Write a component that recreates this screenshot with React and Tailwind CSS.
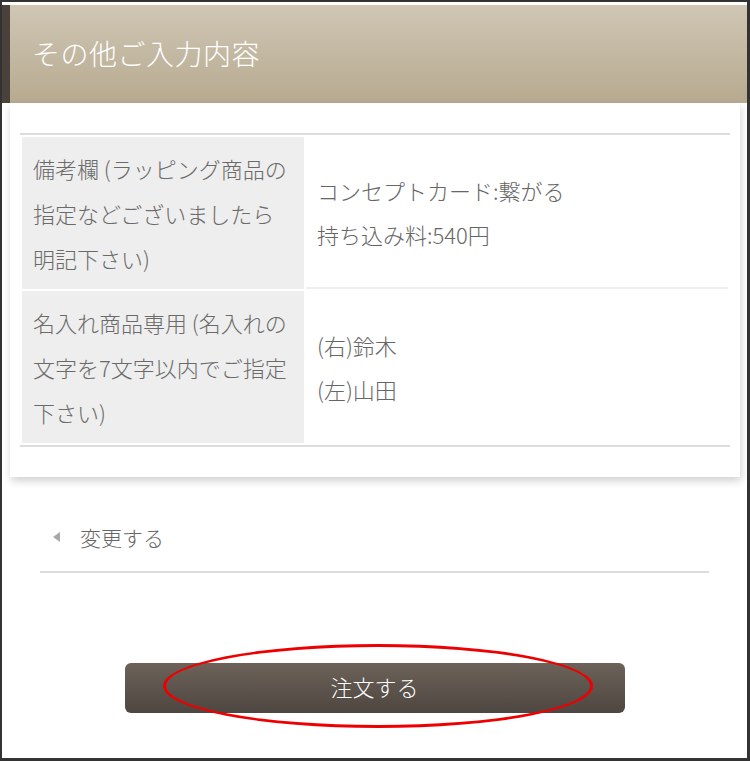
const font = { fontFamily: '"Noto Sans CJK JP", "Noto Sans", sans-serif' }

function InfoTable() {
  const rows = [
    {
      label: '備考欄 (ラッピング商品の指定などございましたら明記下さい)',
      value: ['コンセプトカード:繋がる', '持ち込み料:540円'],
      line: true
    },
    {
      label: '名入れ商品専用 (名入れの文字を7文字以内でご指定下さい)',
      value: ['(右)鈴木', '(左)山田'],
      line: false
    }
  ]

  return (
    <table className="w-[710px] border-separate border-spacing-[2px] border-y-2 border-[#dcdcdc] table-fixed">
      <tbody>
        {rows.map((row, index) => (
          <tr key={index}>
            <th className="w-[282px] h-[152px] bg-[#eeeeee] px-[11px] text-left align-middle font-light text-[22px] leading-[45px] text-[#6a6a6a]">
              {row.label}
            </th>
            <td
              className={
                'h-[152px] px-[11px] align-middle font-light text-[22px] leading-[44px] text-[#666] ' +
                (row.line ? 'border-b-2 border-[#eeeeee]' : '')
              }
            >
              {row.value.map((v, i) => (
                <div key={i}>{v}</div>
              ))}
            </td>
          </tr>
        ))}
      </tbody>
    </table>
  )
}

export default function App() {
  return (
    <div className="w-[750px] h-[761px] bg-[#333333] pt-[2px] pl-[2px] pr-[3px] pb-[3px]" style={font}>
      <div className="h-full bg-white pt-[3px] flex flex-col">
        <div className="h-[98px] border-l-[8px] border-[#4a413b] bg-gradient-to-b from-[#cfc6b4] to-[#b7aa90] flex items-center pl-[22px] pb-[2px]">
          <h1 className="text-[28px] font-light text-white tracking-[0.5px]">その他ご入力内容</h1>
        </div>

        <div className="ml-[8px] mr-[7px] bg-white px-[10px] py-[30px] shadow-[1px_4px_8px_rgba(0,0,0,0.18)]">
          <InfoTable />
        </div>

        <div className="mx-[38px] mt-[45px] pb-[19px] border-b-2 border-[#dddddd] flex items-center">
          <span className="ml-[13px] w-0 h-0 border-y-[5px] border-y-transparent border-r-[7px] border-r-[#a8a8a8]" />
          <a className="ml-[20px] font-light text-[21px] leading-[30px] text-[#666]">変更する</a>
        </div>

        <div className="relative mx-auto mt-[90px] w-[500px]">
          <button className="w-full h-[50px] pb-[4px] rounded-[6px] bg-gradient-to-b from-[#6c6259] to-[#4e4640] text-white text-[22px] leading-[30px] font-light">
            注文する
          </button>
          <div className="absolute left-[38px] top-[-19px] w-[430px] h-[84px] rounded-[50%] border-[3px] border-[#ee0000] pointer-events-none" />
        </div>
      </div>
    </div>
  )
}
